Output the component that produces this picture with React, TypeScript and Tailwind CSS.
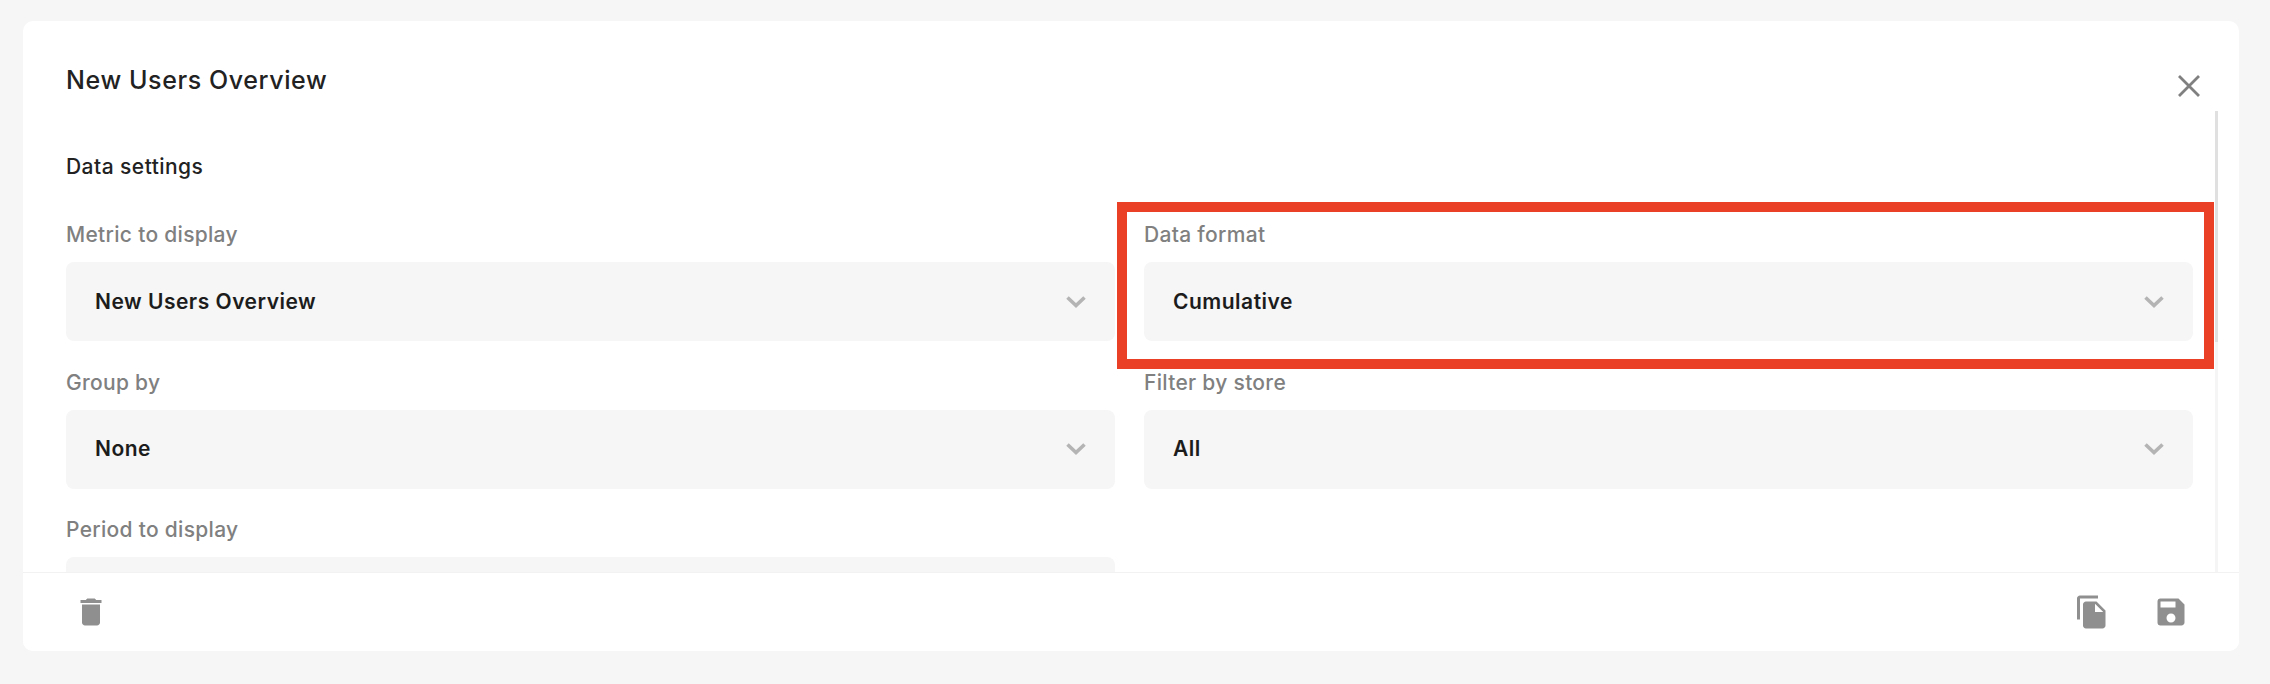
import { MdDelete, MdFileCopy, MdSave } from 'react-icons/md'

const fields = [
  { label: 'Metric to display', value: 'New Users Overview' },
  { label: 'Data format', value: 'Cumulative' },
  { label: 'Group by', value: 'None' },
  { label: 'Filter by store', value: 'All' },
  { label: 'Period to display', value: '' },
]

function Chevron() {
  return (
    <svg width="20" height="12" viewBox="0 0 20 12" fill="none" className="shrink-0">
      <path d="M1.5 1.5 L10 9.5 L18.5 1.5" stroke="#b4b4b4" strokeWidth="3.6" />
    </svg>
  )
}

function Field({ label, value }: { label: string; value: string }) {
  return (
    <div>
      <div className="h-[47px] text-[21px] leading-[40px] font-[550] tracking-[0.3px] text-[#808080]">{label}</div>
      <div className="flex h-[79px] items-center justify-between rounded-[8px] bg-[#f6f6f6] pl-[29px] pr-[29px]">
        <span className="text-[21px] font-semibold tracking-[0.5px] text-[#1c1c1c]">{value}</span>
        <Chevron />
      </div>
    </div>
  )
}

export default function App() {
  return (
    <div className="h-[684px] bg-[#f6f6f6] pl-[23px] pr-[31px] pt-[21px] font-['Inter',sans-serif]">
      <div className="relative flex h-[630px] flex-col overflow-hidden rounded-[10px] bg-white">
        <div className="flex h-[90px] shrink-0 items-start justify-between pl-[43px] pr-[38px]">
          <h1 className="mt-[43px] text-[25px] leading-[32px] font-[550] tracking-[0.6px] text-[#222222]">New Users Overview</h1>
          <svg width="24" height="24" viewBox="0 0 24 24" fill="none" className="mt-[53px]">
            <path d="M2 2 L22 22 M22 2 L2 22" stroke="#808080" strokeWidth="2.8" />
          </svg>
        </div>
        <div className="relative min-h-0 flex-1 overflow-hidden pl-[43px] pr-[46px]">
          <h2 className="mt-[43px] mb-[35px] text-[21px] leading-[26px] font-[550] tracking-[0.45px] text-[#222222]">Data settings</h2>
          <div className="grid grid-cols-2 gap-x-[29px] gap-y-[21.6px]">
            {fields.map((f) => (
              <Field key={f.label} label={f.label} value={f.value} />
            ))}
          </div>
          <div className="absolute top-0 right-[21px] h-full w-[3px] bg-[#f5f5f5]">
            <div className="h-[231px] w-full bg-[#e0e0e0]" />
          </div>
        </div>
        <div className="flex h-[79px] shrink-0 items-center justify-between border-t border-[#f2f2f2] bg-white px-[50px] text-[#8f8f8f]">
          <MdDelete size={36} />
          <div className="flex items-center gap-[43px]">
            <MdFileCopy size={36} />
            <MdSave size={36} />
          </div>
        </div>
        <div className="absolute top-[181px] left-[1094px] h-[167px] w-[1097px] border-[10px] border-[#ea4025]" />
      </div>
    </div>
  )
}
